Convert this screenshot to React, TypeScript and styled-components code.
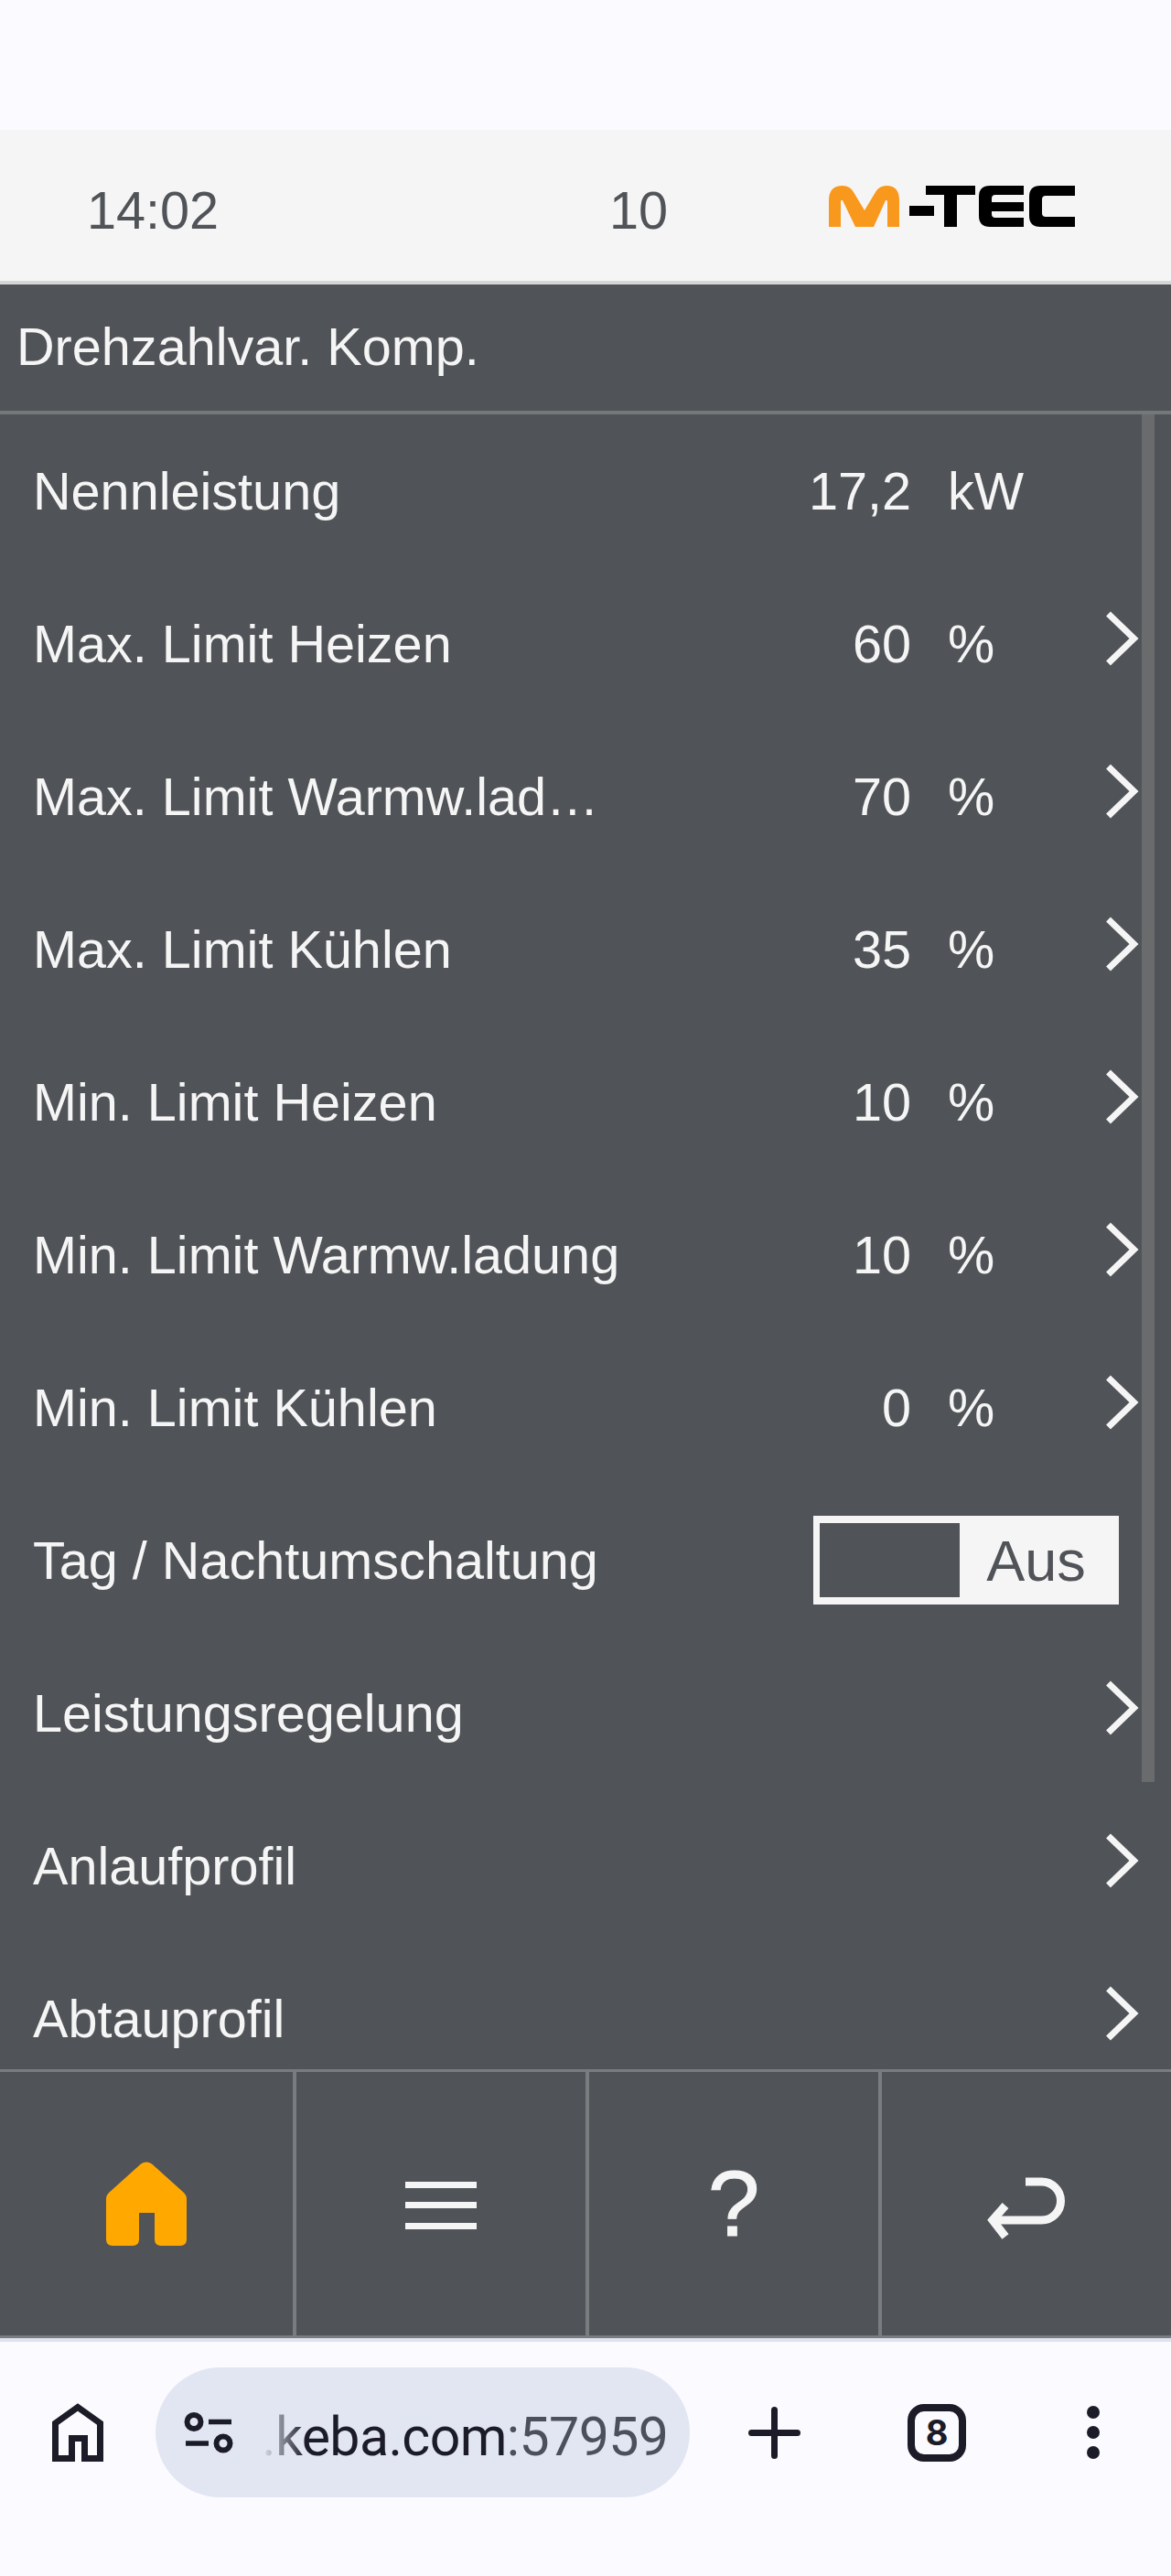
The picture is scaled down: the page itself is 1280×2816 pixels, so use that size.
import React from "react";
import styled, { createGlobalStyle } from "styled-components";

const Global = createGlobalStyle`
  html, body { margin: 0; padding: 0; background: #fafaff; }
  body { font-family: "Liberation Sans", Arial, sans-serif; }
  * { box-sizing: border-box; }
`;

const Page = styled.div`
  width: 1280px;
  height: 2816px;
  padding-top: 142px;
  display: flex;
  flex-direction: column;
  overflow: hidden;
`;

const Header = styled.header`
  height: 169px;
  background: #f5f5f5;
  border-bottom: 4px solid #d5d6d6;
  display: grid;
  grid-template-columns: 571px 240px 1fr;
  padding: 10px 0 0 95px;
  align-items: center;
  color: #505357;
  font-size: 57.6px;
`;

const Logo = styled.svg`
  display: block;
  margin-bottom: 8px;
`;

const Title = styled.div`
  height: 142px;
  background: #505357;
  border-bottom: 4px solid #75787b;
  color: #f5f5f5;
  font-size: 57.6px;
  display: flex;
  align-items: center;
  padding: 0 0 3px 18px;
`;

const List = styled.div`
  position: relative;
  height: 1809px;
  background: #505357;
  overflow: hidden;
`;

const Scrollbar = styled.div`
  position: absolute;
  top: 0;
  right: 18px;
  width: 14px;
  height: 1495px;
  background: #6a6b6d;
`;

const Row = styled.div`
  height: 167px;
  display: grid;
  grid-template-columns: 648px 312px 40px 172px 37px;
  padding-left: 36px;
  align-items: center;
  color: #f5f5f5;
  font-size: 57.6px;
`;

const Label = styled.div`
  grid-column: 1;
  white-space: nowrap;
`;

const Value = styled.div`
  grid-column: 2;
  text-align: right;
`;

const Unit = styled.div`
  grid-column: 4;
`;

const Chevron = styled.svg`
  grid-column: 5;
  display: block;
  margin-bottom: 11px;
  overflow: visible;
`;

const Toggle = styled.div`
  grid-column: 2 / -1;
  justify-self: end;
  margin-right: 22px;
  width: 334px;
  height: 97px;
  background: #f5f5f5;
  padding: 8px 7px;
  display: flex;
  align-items: center;
  color: #505357;
  font-size: 63px;
`;

const ToggleSlot = styled.div`
  width: 153px;
  height: 81px;
  background: #505357;
`;

const ToggleText = styled.span`
  flex: 1;
  text-align: center;
`;

const Nav = styled.nav`
  height: 294px;
  background: #505357;
  border-top: 3px solid #7a7d80;
  border-bottom: 3px solid #7a7d80;
  display: grid;
  grid-template-columns: 324px 320px 320px 316px;
`;

const NavCell = styled.div<{ $divider?: boolean }>`
  display: flex;
  align-items: center;
  justify-content: center;
  border-right: ${(p) => (p.$divider ? "4px solid #7a7d80" : "none")};
  color: #f5f5f5;
`;

const Question = styled.span`
  font-size: 102px;
  line-height: 1;
  -webkit-text-stroke: 1px #f5f5f5;
`;

const NavEdge = styled.div`
  height: 4px;
  background: #e0e3ee;
`;

const BrowserBar = styled.div`
  flex: 1;
  background: #fafaff;
  padding: 28px 0 0 57px;
`;

const BrowserRow = styled.div`
  height: 142px;
  display: flex;
  align-items: center;
`;

const Pill = styled.div`
  margin-left: 57px;
  width: 584px;
  height: 142px;
  border-radius: 71px;
  background: #e2e6f3;
  display: flex;
  align-items: center;
  padding-left: 31px;
`;

const Url = styled.div`
  margin-left: 31px;
  padding-top: 8px;
  font-family: Roboto, "Liberation Sans", sans-serif;
  font-size: 59px;
  letter-spacing: -0.6px;
  white-space: nowrap;
  color: #1b1c28;
  -webkit-mask-image: linear-gradient(to right, transparent 0, #000 48px);
  mask-image: linear-gradient(to right, transparent 0, #000 48px);
`;

const UrlPort = styled.span`
  color: #4c505c;
`;

const BarIcon = styled.svg<{ $gap: number }>`
  display: block;
  flex: none;
  margin-left: ${(p) => p.$gap}px;
`;

const TabBox = styled.div`
  margin-left: 117px;
  width: 64px;
  height: 63px;
  border: 8px solid #1b1c28;
  border-radius: 18px;
  display: flex;
  align-items: center;
  justify-content: center;
  color: #1b1c28;
  font-family: Inter, Roboto, sans-serif;
  font-weight: 700;
  font-size: 38px;
  line-height: 1;
`;

const rows: { label: string; value?: string; unit?: string; arrow?: boolean; toggle?: boolean }[] = [
  { label: "Nennleistung", value: "17,2", unit: "kW" },
  { label: "Max. Limit Heizen", value: "60", unit: "%", arrow: true },
  { label: "Max. Limit Warmw.lad…", value: "70", unit: "%", arrow: true },
  { label: "Max. Limit Kühlen", value: "35", unit: "%", arrow: true },
  { label: "Min. Limit Heizen", value: "10", unit: "%", arrow: true },
  { label: "Min. Limit Warmw.ladung", value: "10", unit: "%", arrow: true },
  { label: "Min. Limit Kühlen", value: "0", unit: "%", arrow: true },
  { label: "Tag / Nachtumschaltung", toggle: true },
  { label: "Leistungsregelung", arrow: true },
  { label: "Anlaufprofil", arrow: true },
  { label: "Abtauprofil", arrow: true },
];

export default function App() {
  return (
    <Page>
      <Global />
      <Header>
        <span>14:02</span>
        <span>10</span>
        <Logo width="269" height="45" viewBox="906 203 269 45" aria-label="M-TEC">
          <path
            fill="#f8981d"
            d="M906 248V219Q906 203 921 203Q929 203 933 210L945 230L957 210Q961 203 969 203Q983 203 983 219V248H970V221Q970 218 968 219L955 248H935L921 219Q919 218 919 221V248Z"
          />
          <path
            fill="#000"
            d="M994 225H1021V236H994ZM1012 203H1066V213H1046V248H1032V213H1012ZM1119 203H1082Q1070 203 1070 215V236Q1070 248 1082 248H1119V238H1088Q1084 238 1084 234V231H1119V221H1084V217Q1084 213 1088 213H1119ZM1175 203H1137Q1125 203 1125 215V236Q1125 248 1137 248H1175V237H1143Q1139 237 1139 233V218Q1139 214 1143 214H1175Z"
          />
        </Logo>
      </Header>
      <Title>Drehzahlvar. Komp.</Title>
      <List>
        {rows.map((r) => (
          <Row key={r.label}>
            <Label>{r.label}</Label>
            {r.value && <Value>{r.value}</Value>}
            {r.unit && <Unit>{r.unit}</Unit>}
            {r.arrow && (
              <Chevron width="37" height="60" viewBox="0 0 37 60" fill="none">
                <path d="M3.5 3L31.5 30L3.5 57" stroke="#f5f5f5" strokeWidth="7" />
              </Chevron>
            )}
            {r.toggle && (
              <Toggle>
                <ToggleSlot />
                <ToggleText>Aus</ToggleText>
              </Toggle>
            )}
          </Row>
        ))}
        <Scrollbar />
      </List>
      <Nav>
        <NavCell $divider>
          <svg width="88" height="92" viewBox="0 0 88 92">
            <path
              fill="#ffa800"
              d="M38 2.5Q44 -1.5 50 2.5L85 34Q88 37 88 40V85Q88 92 81 92H60Q53 92 53 85V56H36V85Q36 92 29 92H7Q0 92 0 85V40Q0 37 3 34Z"
            />
          </svg>
        </NavCell>
        <NavCell $divider>
          <svg width="78" height="56" viewBox="0 0 78 56" fill="#f5f5f5">
            <rect y="4" width="78" height="7" />
            <rect y="26" width="78" height="7" />
            <rect y="49" width="78" height="7" />
          </svg>
        </NavCell>
        <NavCell $divider>
          <Question>?</Question>
        </NavCell>
        <NavCell>
          <svg width="86" height="78" viewBox="0 0 86 78" fill="none" stroke="#f5f5f5" strokeWidth="9">
            <path d="M42 15H59.5A21 21 0 0 1 59.5 57H8" />
            <path d="M20 41L6 57L20 75" />
          </svg>
        </NavCell>
      </Nav>
      <NavEdge />
      <BrowserBar>
        <BrowserRow>
          <BarIcon $gap={0} width="56" height="64" viewBox="57 2628 56 64" fill="none" stroke="#1b1c28" strokeWidth="7">
            <path d="M60.5 2688.5V2650L85 2632.5L109.5 2650V2688.5H92.5V2666.5H78.5V2688.5Z" />
          </BarIcon>
          <Pill>
            <svg width="54" height="46" viewBox="201 2636 54 46" fill="none" stroke="#1b1c28">
              <circle cx="212" cy="2647.5" r="7.5" strokeWidth="6" />
              <circle cx="244" cy="2671" r="7.5" strokeWidth="6" />
              <path d="M228 2647.5H253M203 2671H228" strokeWidth="5.5" />
            </svg>
            <Url>
              .keba.com<UrlPort>:57959</UrlPort>
            </Url>
          </Pill>
          <BarIcon $gap={64} width="57" height="57" viewBox="0 0 57 57" fill="none" stroke="#1b1c28" strokeWidth="7" strokeLinecap="round">
            <path d="M3.5 28.5H53.5M28.5 3.5V53.5" />
          </BarIcon>
          <TabBox>8</TabBox>
          <BarIcon $gap={132} width="14" height="58" viewBox="0 0 14 58" fill="#1b1c28">
            <circle cx="7" cy="7" r="7" />
            <circle cx="7" cy="29" r="7" />
            <circle cx="7" cy="51" r="7" />
          </BarIcon>
        </BrowserRow>
      </BrowserBar>
    </Page>
  );
}
